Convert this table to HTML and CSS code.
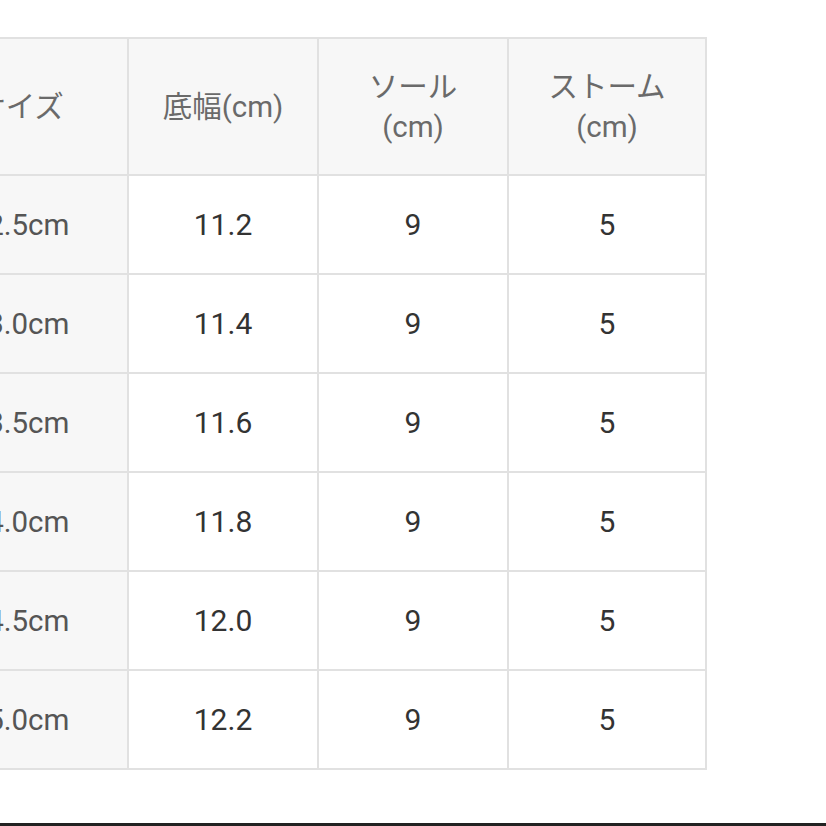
FILE: index.html
```html
<!DOCTYPE html>
<html lang="ja">
<head>
<meta charset="utf-8">
<link rel="stylesheet" href="styles.css">
</head>
<body>
<div class="page">
  <div class="size-table">
    <div class="cell head">サイズ</div>
    <div class="cell head">底幅(cm)</div>
    <div class="cell head">ソール<br>(cm)</div>
    <div class="cell head">ストーム<br>(cm)</div>

    <div class="cell key">22.5cm</div>
    <div class="cell val">11.2</div>
    <div class="cell val">9</div>
    <div class="cell val">5</div>

    <div class="cell key">23.0cm</div>
    <div class="cell val">11.4</div>
    <div class="cell val">9</div>
    <div class="cell val">5</div>

    <div class="cell key">23.5cm</div>
    <div class="cell val">11.6</div>
    <div class="cell val">9</div>
    <div class="cell val">5</div>

    <div class="cell key">24.0cm</div>
    <div class="cell val">11.8</div>
    <div class="cell val">9</div>
    <div class="cell val">5</div>

    <div class="cell key">24.5cm</div>
    <div class="cell val">12.0</div>
    <div class="cell val">9</div>
    <div class="cell val">5</div>

    <div class="cell key">25.0cm</div>
    <div class="cell val">12.2</div>
    <div class="cell val">9</div>
    <div class="cell val">5</div>
  </div>
  <div class="bottom-bar"></div>
</div>
</body>
</html>
```
FILE: styles.css
```css
html, body {
  margin: 0;
  padding: 0;
  background: #ffffff;
  overflow: hidden;
}
.page {
  width: 826px;
  height: 826px;
  padding-top: 37px;
  box-sizing: border-box;
  font-family: Roboto, "Noto Sans CJK JP", sans-serif;
  overflow: hidden;
}
.size-table {
  display: grid;
  grid-template-columns: 214px 188px 188px 196px;
  grid-template-rows: 135px repeat(6, 97px);
  gap: 2px;
  padding: 2px;
  background: #e1e1e1;
  margin-left: -89px;
  width: max-content;
}
.cell {
  display: flex;
  align-items: center;
  justify-content: center;
  text-align: center;
}
.head {
  background: #f7f7f7;
  color: #6a6a6a;
  font-size: 29.5px;
  line-height: 40px;
}
.key {
  background: #f7f7f7;
  color: #555555;
  font-size: 29.5px;
}
.val {
  background: #ffffff;
  color: #333333;
  font-size: 30px;
}
.bottom-bar {
  margin-top: 53px;
  height: 3px;
  background: #222222;
}
```
